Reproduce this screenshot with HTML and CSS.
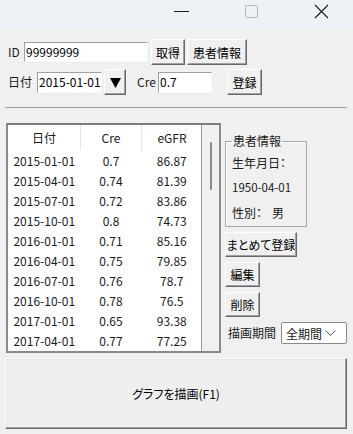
FILE: index.html
```html
<!DOCTYPE html>
<html lang="ja">
<head>
    <meta charset="UTF-8">
    <title>eGFR</title>
    <link rel="stylesheet" href="styles.css">
</head>
<body>
    <div class="window">
        <div class="titlebar">
            <div class="caption-btn">
                <svg width="15" height="15" viewBox="0 0 15 15"><line x1="0" y1="7.5" x2="15" y2="7.5" stroke="#1a1a1a" stroke-width="1"/></svg>
            </div>
            <div class="caption-btn">
                <svg width="15" height="15" viewBox="0 0 15 15"><rect x="1.5" y="1.5" width="12" height="12" rx="2" fill="none" stroke="#b4b4b4" stroke-width="1"/></svg>
            </div>
            <div class="caption-btn">
                <svg width="15" height="15" viewBox="0 0 15 15"><path d="M1 1 L14 14 M14 1 L1 14" stroke="#1a1a1a" stroke-width="1.1"/></svg>
            </div>
        </div>

        <div class="form">
            <div class="row row-id">
                <span class="lbl lbl-id">ID</span>
                <div class="input input-id">99999999</div>
                <button class="btn btn-get">取得</button>
                <button class="btn btn-info">患者情報</button>
            </div>
            <div class="row row-date">
                <span class="lbl lbl-date">日付</span>
                <div class="input input-date">2015-01-01</div>
                <button class="btn btn-drop">
                    <svg width="11" height="10" viewBox="0 0 11 10"><polygon points="0,0 11,0 5.5,10" fill="#000"/></svg>
                </button>
                <span class="lbl lbl-cre">Cre</span>
                <div class="input input-cre">0.7</div>
                <button class="btn btn-save">登録</button>
            </div>
        </div>

        <div class="separator"></div>

        <div class="main">
            <div class="list">
                <div class="list-body">
                    <table class="grid">
                        <thead>
                            <tr><th class="c-date">日付</th><th class="c-cre">Cre</th><th class="c-egfr">eGFR</th></tr>
                        </thead>
                        <tbody>
                            <tr><td>2015-01-01</td><td>0.7</td><td>86.87</td></tr>
                            <tr><td>2015-04-01</td><td>0.74</td><td>81.39</td></tr>
                            <tr><td>2015-07-01</td><td>0.72</td><td>83.86</td></tr>
                            <tr><td>2015-10-01</td><td>0.8</td><td>74.73</td></tr>
                            <tr><td>2016-01-01</td><td>0.71</td><td>85.16</td></tr>
                            <tr><td>2016-04-01</td><td>0.75</td><td>79.85</td></tr>
                            <tr><td>2016-07-01</td><td>0.76</td><td>78.7</td></tr>
                            <tr><td>2016-10-01</td><td>0.78</td><td>76.5</td></tr>
                            <tr><td>2017-01-01</td><td>0.65</td><td>93.38</td></tr>
                            <tr><td>2017-04-01</td><td>0.77</td><td>77.25</td></tr>
                        </tbody>
                    </table>
                </div>
                <div class="scroll">
                    <div class="thumb"></div>
                </div>
            </div>

            <div class="side">
                <fieldset class="group">
                    <legend>患者情報</legend>
                    <div class="info-line">生年月日：</div>
                    <div class="info-line info-num">1950-04-01</div>
                    <div class="info-line">性別：<span class="sex">男</span></div>
                </fieldset>
                <button class="btn btn-bulk">まとめて登録</button>
                <button class="btn btn-small">編集</button>
                <button class="btn btn-small">削除</button>
                <div class="period">
                    <span class="lbl">描画期間</span>
                    <div class="combo">
                        <span>全期間</span>
                        <svg width="11" height="6" viewBox="0 0 11 6"><polyline points="0.5,0.5 5.5,5.5 10.5,0.5" fill="none" stroke="#555" stroke-width="1"/></svg>
                    </div>
                </div>
            </div>
        </div>

        <button class="btn btn-graph">グラフを描画(F1)</button>
    </div>
</body>
</html>
```

FILE: styles.css
```css
body {
    margin: 0;
    font-family: "Noto Sans CJK JP", "Noto Sans", sans-serif;
    font-size: 12px;
    font-feature-settings: "palt";
    color: #1a1a1a;
    background: #ffffff;
}
.window {
    width: 353px;
    height: 434px;
    background-color: #f0f0f0;
    overflow: hidden;
    display: flex;
    flex-direction: column;
}
.titlebar {
    height: 28px;
    flex-shrink: 0;
    background-color: #eef2f7;
    display: flex;
    padding-left: 146px;
    overflow: hidden;
}
.caption-btn {
    width: 70px;
    flex-shrink: 0;
    display: flex;
    justify-content: center;
    padding-top: 4px;
}

/* top form */
.form {
    padding: 11px 0 0 8px;
}
.row {
    display: flex;
    align-items: center;
    height: 26px;
}
.row-date {
    margin-top: 4px;
}
.lbl {
    white-space: nowrap;
    line-height: 1;
}
.lbl-id { width: 16px; }
.lbl-date { width: 29px; }
.lbl-cre { width: 21px; margin-left: 11px; }
.input {
    box-sizing: border-box;
    background: #ffffff;
    border: 1px solid;
    border-color: #a0a0a0 #f8f8f8 #f8f8f8 #a0a0a0;
    padding: 0 1px;
    font-size: 12px;
    line-height: 18px;
    color: #000;
    white-space: nowrap;
    overflow: hidden;
}
.input-id { width: 124px; height: 20px; margin-top: -1px; }
.input-date { width: 65px; height: 21px; }
.input-cre { width: 54px; height: 21px; }

.btn {
    box-sizing: border-box;
    font-family: inherit;
    font-size: 12px;
    font-feature-settings: "palt";
    color: #000;
    background-color: #f0f0f0;
    border: 1px solid;
    border-color: #ffffff #696969 #696969 #ffffff;
    box-shadow: inset -1px -1px #a0a0a0;
    padding: 0;
    margin: 0;
    height: 26px;
}
.btn-get { width: 34px; margin-left: 3px; }
.btn-info { width: 60px; margin-left: 2px; }
.btn-drop {
    width: 22px;
    margin-left: 2px;
    display: flex;
    align-items: center;
    justify-content: center;
    padding-top: 1px;
}
.input-cre + .btn-save { margin-left: 15px; }
.btn-save { width: 35px; }

.separator {
    height: 1px;
    background-color: #a0a0a0;
    margin: 12px 6px 0 5px;
}

/* list + side panel */
.main {
    display: flex;
    margin-top: 15px;
    padding-left: 6px;
}
.list {
    width: 215px;
    height: 230px;
    box-sizing: border-box;
    border: 2px solid #8a8a8a;
    border-top-color: #7c7c7c;
    display: flex;
}
.list-body {
    width: 193px;
    background: #ffffff;
    border-right: 1px solid #9a9a9a;
    overflow: hidden;
}
.scroll {
    flex: 1;
    background: #f0f0f0;
    padding: 17px 0 0 8px;
}
.thumb {
    width: 2px;
    height: 48px;
    background-color: #8a8a8a;
    border-radius: 1px;
}
.grid {
    border-collapse: collapse;
    width: 192px;
    table-layout: fixed;
}
.grid th {
    height: 25px;
    padding: 0 0 1px 0;
    font-weight: normal;
    border-right: 1px solid #e5e5e5;
    text-align: center;
}
.grid th.c-egfr { border-right: none; }
.c-date { width: 72px; }
.c-cre { width: 60px; }
.c-egfr { width: 60px; }
.grid td {
    height: 20px;
    padding: 0;
    text-align: center;
    line-height: 20px;
}

.side {
    margin-left: 4px;
    width: 122px;
    display: flex;
    flex-direction: column;
    align-items: flex-start;
}
.group {
    box-sizing: border-box;
    width: 82px;
    height: 94px;
    margin: 10px 0 0 0;
    padding: 1px 0 0 6px;
    border: 1px solid #a8a8a8;
    box-shadow: inset 1px 1px #ffffff;
}
.group legend {
    padding: 0 1px;
    margin-left: 0;
    line-height: 16px;
}
.info-line {
    height: 25px;
    line-height: 25px;
    white-space: nowrap;
}
.info-num {
    font-size: 11.5px;
}
.sex {
    margin-left: 10px;
}
.btn-bulk {
    width: 72px;
    height: 25px;
    margin-top: 5px;
}
.btn-small {
    width: 35px;
    height: 25px;
    margin-top: 5px;
}
.period {
    display: flex;
    align-items: center;
    margin-top: 5px;
}
.period .lbl {
    margin-left: 3px;
    width: 53px;
}
.combo {
    box-sizing: border-box;
    width: 66px;
    height: 22px;
    background: #ffffff;
    border: 1px solid #8a8a8a;
    border-radius: 2px;
    display: flex;
    align-items: center;
    justify-content: space-between;
    padding: 0 10px 0 4px;
}

.btn-graph {
    width: 342px;
    height: 71px;
    margin: 5px 0 0 5px;
    background-color: #efefef;
    border-color: #ffffff #696969 #696969 #ffffff;
    box-shadow: inset -1px -1px #a0a0a0, inset 1px 1px #e3e3e3;
}
```
